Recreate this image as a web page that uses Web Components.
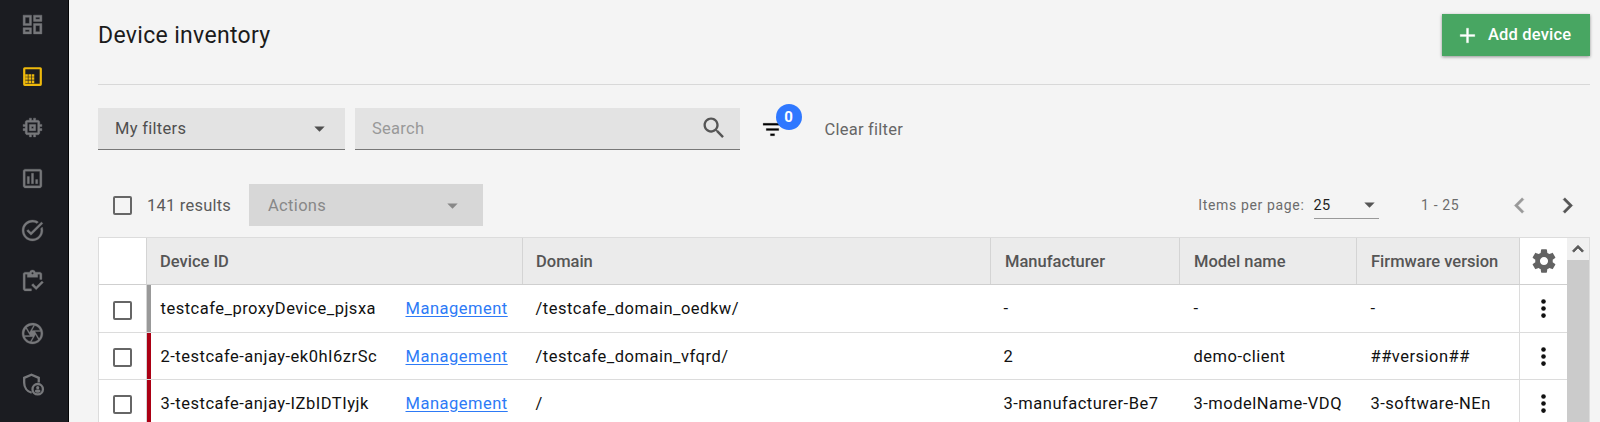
<!DOCTYPE html>
<html lang="en">
<head>
<meta charset="utf-8">
<title>Device inventory</title>
<style>
html,body{margin:0;height:100%;overflow:hidden}
body{font-family:Roboto,sans-serif;background:#f4f4f4}
</style>
</head>
<body>
<app-shell></app-shell>
<script>
const ICONS = {
  dashboard:'<path stroke="currentColor" stroke-width=".4" d="M19 5v2h-4V5h4M9 5v6H5V5h4m10 8v6h-4v-6h4M9 17v2H5v-2h4M21 3h-8v6h8V3zM11 3H3v10h8V3zm10 8h-8v10h8V11zm-10 4H3v6h8v-6z"/>',
  inventory:'<path fill-rule="evenodd" d="M4.500 3h15a1.500 1.500 0 0 1 1.500 1.500v15a1.500 1.500 0 0 1-1.500 1.500h-15a1.500 1.500 0 0 1-1.500-1.500v-15a1.500 1.500 0 0 1 1.500-1.500zM5.100 5.100v13.800h13.800V5.100z"/><path d="M5 9.800h2.500v2.400H5zM8.100 9.800h2.500v2.400H8.100zM11.200 9.800h2.500v2.400h-2.500zM5 12.800h2.500v2.400H5zM8.100 12.800h2.500v2.400H8.100zM11.200 12.800h2.500v2.400h-2.500zM5 15.800h2.500v2.700H5zM8.100 15.800h2.500v2.700H8.100zM11.200 15.800h2.500v2.700h-2.500z"/>',
  chip:'<path stroke="currentColor" stroke-width=".4" d="M15 9H9v6h6V9zm-2 4h-2v-2h2v2zm8-2V9h-2V7c0-1.100-.9-2-2-2h-2V3h-2v2h-2V3H9v2H7c-1.100 0-2 .9-2 2v2H3v2h2v2H3v2h2v2c0 1.100.9 2 2 2h2v2h2v-2h2v2h2v-2h2c1.100 0 2-.9 2-2v-2h2v-2h-2v-2h2zm-4 6H7V7h10v10z"/>',
  chart:'<path stroke="currentColor" stroke-width=".3" d="M19 3H5c-1.100 0-2 .9-2 2v14c0 1.100.9 2 2 2h14c1.100 0 2-.9 2-2V5c0-1.100-.9-2-2-2zm0 16H5V5h14v14zM7 10h2v7H7zm4-3h2v10h-2zm4 6h2v4h-2z"/>',
  task:'<path stroke="currentColor" stroke-width=".3" d="M22 5.180L10.590 16.600l-4.240-4.240 1.410-1.410 2.830 2.830 10-10L22 5.180zm-2.210 5.040c.13.57.21 1.170.21 1.780 0 4.420-3.580 8-8 8s-8-3.580-8-8 3.580-8 8-8c1.580 0 3.040.46 4.280 1.250l1.440-1.440C16.100 2.670 14.130 2 12 2 6.480 2 2 6.480 2 12s4.480 10 10 10 10-4.480 10-10c0-1.190-.22-2.330-.6-3.390l-1.610 1.610z"/>',
  clipboard:'<path stroke="currentColor" stroke-width=".3" d="M5 5h2v3h10V5h2v5h2V5c0-1.100-.9-2-2-2h-4.180C14.400 1.840 13.300 1 12 1s-2.400.84-2.820 2H5c-1.100 0-2 .9-2 2v14c0 1.100.9 2 2 2h6v-2H5V5zm7-2c.55 0 1 .45 1 1s-.45 1-1 1-1-.45-1-1 .45-1 1-1z"/><path stroke="currentColor" stroke-width=".3" d="M21 11.500L15.510 17l-3.010-3L11 15.500l4.510 4.500L22.500 13z"/>',
  aperture:'<path stroke="currentColor" stroke-width=".3" d="M14.250 2.260l-.08-.04-.01.02C13.460 2.090 12.740 2 12 2 6.480 2 2 6.480 2 12s4.480 10 10 10 10-4.480 10-10c0-4.750-3.310-8.720-7.750-9.740zM19.410 9h-7.990l2.710-4.700c2.400.66 4.350 2.420 5.280 4.700zM13.100 4.080L10.270 9l-1.150 2L6.400 6.300C7.840 4.880 9.820 4 12 4c.37 0 .74.03 1.100.08zM5.700 7.090L8.540 12l1.150 2H4.260C4.100 13.360 4 12.690 4 12c0-1.840.63-3.540 1.700-4.910zM4.590 15h7.980l-2.710 4.700c-2.400-.67-4.340-2.420-5.270-4.700zm6.310 4.910L14.890 13l2.720 4.700C16.160 19.120 14.180 20 12 20c-.38 0-.74-.04-1.100-.09zm7.400-3l-4-6.910h5.430c.17.64.27 1.310.27 2 0 1.840-.63 3.540-1.700 4.910z"/>',
  shield:'<path fill="none" stroke="currentColor" stroke-width="2.200" d="M18 10V5.600L11 2.600 4 5.600V10.200c0 4.500 2.900 8.500 7.200 9.700"/><circle cx="17" cy="16.500" r="5" fill="none" stroke="currentColor" stroke-width="2.200"/><circle cx="17" cy="15" r="1.500"/><path d="M14.200 18.400c.2-1.100 1.700-1.500 2.800-1.500s2.600.4 2.800 1.500c-.6.9-1.600 1.500-2.800 1.500s-2.200-.6-2.800-1.500z"/>',
  plus:'<path stroke="currentColor" stroke-width=".3" d="M19 13h-6v6h-2v-6H5v-2h6V5h2v6h6z"/>',
  caret:'<path d="M7 10l5 5 5-5z"/>',
  search:'<path d="M15.500 14h-.79l-.28-.27C15.410 12.590 16 11.110 16 9.500 16 5.910 13.090 3 9.500 3S3 5.910 3 9.500 5.910 16 9.500 16c1.610 0 3.090-.59 4.230-1.570l.27.28v.79l5 4.990L20.490 19l-4.990-5zm-6 0C7.010 14 5 11.990 5 9.500S7.010 5 9.500 5 14 7.010 14 9.500 11.990 14 9.500 14z"/>',
  filter:'<path stroke="currentColor" stroke-width=".2" d="M10 18h4v-2h-4v2zM3 6v2h18V6H3zm3 7h12v-2H6v2z"/>',
  left:'<path stroke="currentColor" stroke-width=".3" d="M15.410 7.410L14 6l-6 6 6 6 1.410-1.410L10.830 12z"/>',
  right:'<path stroke="currentColor" stroke-width=".3" d="M10 6L8.590 7.410 13.170 12l-4.580 4.590L10 18l6-6z"/>',
  up:'<path stroke="currentColor" stroke-width=".9" d="M12 8l-6 6 1.410 1.410L12 10.830l4.590 4.580L18 14z"/>',
  gear:'<path d="M19.430 12.980c.04-.32.07-.64.07-.98s-.03-.66-.07-.98l2.110-1.650c.19-.15.24-.42.12-.64l-2-3.460c-.12-.22-.39-.3-.61-.22l-2.490 1c-.52-.4-1.080-.73-1.690-.98l-.38-2.650C14.460 2.180 14.250 2 14 2h-4c-.25 0-.46.18-.49.42l-.38 2.650c-.61.25-1.170.59-1.690.98l-2.490-1c-.23-.09-.49 0-.61.22l-2 3.460c-.13.22-.07.49.12.64l2.110 1.650c-.04.32-.07.65-.07.98s.03.66.07.98l-2.110 1.650c-.19.15-.24.42-.12.64l2 3.460c.12.22.39.3.61.22l2.490-1c.52.4 1.080.73 1.690.98l.38 2.650c.03.24.24.42.49.42h4c.25 0 .46-.18.49-.42l.38-2.650c.61-.25 1.170-.59 1.690-.98l2.490 1c.23.09.49 0 .61-.22l2-3.460c.12-.22.07-.49-.12-.64l-2.110-1.650zM12 15.500c-1.930 0-3.500-1.570-3.500-3.500s1.570-3.500 3.500-3.500 3.500 1.570 3.500 3.500-1.570 3.500-3.500 3.500z"/>',
  more:'<circle cx="12" cy="5.200" r="2.200"/><circle cx="12" cy="12" r="2.200"/><circle cx="12" cy="18.800" r="2.200"/>'
};
const define = (name, html) => customElements.define(name, class extends HTMLElement {
  constructor(){
    super();
    this.attachShadow({mode:'open'}).innerHTML = typeof html === 'function' ? html(this) : html;
  }
});
const base = '*{box-sizing:border-box}';

define('ui-icon', el => `<style>:host{display:block;width:var(--size,25px);height:var(--size,25px);flex:none}svg{display:block;width:100%;height:100%;fill:currentColor}</style><svg viewBox="0 0 24 24">${ICONS[el.getAttribute('name')]}</svg>`);

define('ui-checkbox', `<style>:host{display:block;box-sizing:border-box;width:19px;height:19px;border:2px solid #666;border-radius:2px;flex:none}</style>`);

define('side-nav', `<style>${base}
:host{display:flex;flex-direction:column;align-items:center;gap:26.400px;width:69px;height:422px;padding:12.300px 4px 0 0;background:#1b1c21;border-right:1px solid #050506;color:#77787b;box-sizing:border-box;flex:none;overflow:hidden}
.on{color:#eeb90c}</style>
<ui-icon name="dashboard"></ui-icon><ui-icon name="inventory" class="on"></ui-icon><ui-icon name="chip"></ui-icon><ui-icon name="chart"></ui-icon><ui-icon name="task"></ui-icon><ui-icon name="clipboard"></ui-icon><ui-icon name="aperture"></ui-icon><ui-icon name="shield"></ui-icon>`);

define('page-header', `<style>${base}
:host{display:flex;justify-content:space-between;align-items:flex-start;height:85px;box-sizing:border-box;border-bottom:1px solid #d8d8d8;padding-top:14px}
h1{margin:0;font-size:23px;line-height:43px;font-weight:400;letter-spacing:.33px;color:#1b1b1b}
button{display:flex;align-items:center;width:148.500px;height:42px;padding:0 0 0 13px;gap:8.500px;border:0;background:#48a662;color:#fff;font:500 16.500px/42px Roboto,sans-serif;letter-spacing:.17px;box-shadow:0 1px 3px rgba(0,0,0,.4)}
</style><h1>Device inventory</h1><button><ui-icon name="plus"></ui-icon><span>Add device</span></button>`);

define('select-box', `<style>${base}
:host{display:flex;align-items:center;justify-content:space-between;height:42px;box-sizing:border-box;padding:0 13px 0 17px;background:#e3e3e3;border-bottom:1px solid #777;color:#4f4f4f;font-size:16.500px;letter-spacing:.3px}
:host([disabled]){background:#d7d7d7;border:0;color:#888;padding:0 18px 0 19px}
</style><slot></slot><ui-icon name="caret"></ui-icon>`);

define('search-box', `<style>${base}
:host{display:flex;align-items:center;justify-content:space-between;height:42px;box-sizing:border-box;padding:0 12px 0 17px;background:#e3e3e3;border-bottom:1px solid #777;color:#999;font-size:16.500px;letter-spacing:.27px}
ui-icon{--size:28px;color:#555;margin-top:-2px}
</style><slot></slot><ui-icon name="search"></ui-icon>`);

define('filter-toggle', `<style>${base}
:host{display:block;position:relative;width:25px;height:25px;color:#000}
span{position:absolute;left:15.500px;top:-12.500px;width:26px;height:26px;border-radius:50%;background:#2f78ff;color:#fff;font-weight:700;font-size:15px;line-height:26px;letter-spacing:0;text-align:center}
</style><ui-icon name="filter"></ui-icon><span><slot></slot></span>`);

define('filter-bar', `<style>${base}
:host{display:flex;align-items:center;height:42px;margin-top:23px;color:#666;font-size:16.500px;letter-spacing:.24px}
select-box{width:247px;margin-right:10px}search-box{width:385px;margin-right:20px}.clear{margin-left:39.500px}
filter-toggle{margin-top:0}
</style><select-box>My filters</select-box><search-box>Search</search-box><filter-toggle>0</filter-toggle><span class="clear">Clear filter</span>`);

define('result-bar', `<style>${base}
:host{display:flex;align-items:center;height:42px;margin-top:34px;color:#5a5a5a;font-size:16.500px;letter-spacing:.22px}
ui-checkbox{margin:0 15px 0 15px}
.n{width:102px}select-box{width:234px;letter-spacing:.33px}
.pager{margin-left:auto;display:flex;align-items:center;font-size:14px;letter-spacing:.65px;color:#6c6c6c}
.ps{display:flex;align-items:center;justify-content:space-between;width:65px;height:27px;margin:0 42.500px 0 9px;border-bottom:1px solid #999;color:#1f1f1f;font-size:14.500px;letter-spacing:.3px}
.ps span{padding-top:1px}
.ps ui-icon{color:#555;margin-right:-3px}
.range{width:83px}
.prev{color:#999;margin-right:17px}.next{color:#555;margin-right:7px}
.prev,.next{--size:31px}
</style><ui-checkbox></ui-checkbox><span class="n">141 results</span><select-box disabled>Actions</select-box>
<div class="pager"><span>Items per page:</span><div class="ps"><span>25</span><ui-icon name="caret"></ui-icon></div><span class="range">1 - 25</span><ui-icon class="prev" name="left"></ui-icon><ui-icon class="next" name="right"></ui-icon></div>`);

const cols = 'grid-template-columns:47px 376px 468px 189px 177px 163px 48px';
define('table-head', `<style>${base}
:host{display:grid;${cols};height:47px;border-bottom:1px solid #cfcfcf;box-sizing:border-box}
div{display:flex;align-items:center;padding-left:13px;background:#ebebeb;border-left:1px solid #d4d4d4;color:#555;font-weight:500;font-size:16.500px}
div:first-of-type{background:#fff;border:0}
div:nth-of-type(n+4){padding-left:14px}
div:last-of-type{background:#fff;padding:0;justify-content:center;color:#636363}
div:last-of-type ui-icon{--size:28px}
</style><div></div><div>Device ID</div><div>Domain</div><div>Manufacturer</div><div>Model name</div><div>Firmware version</div><div><ui-icon name="gear"></ui-icon></div>`);

define('device-row', el => { const a = n => el.getAttribute(n); return `<style>${base}
:host{display:grid;${cols};height:var(--h,47px);border-bottom:1px solid #dcdcdc;box-sizing:border-box;background:#fff}
div{display:flex;align-items:center;padding:0 0 0 13.500px;color:#111;font-size:16.500px;letter-spacing:.5px;white-space:nowrap}
div:nth-of-type(n+5){padding-left:14.500px}
.check{padding:3px 0 0 13.500px}
.id{position:relative;border-left:1px solid #d4d4d4;padding-left:13.500px}
.id::before{content:"";position:absolute;left:0;top:0;bottom:0;width:4px;background:var(--status,#ab0014)}
.id span{width:245px}
a{color:#2d7af6;text-decoration:underline;text-underline-offset:2px}
div.menu{justify-content:center;padding:0;border-left:1px solid #dcdcdc;color:#111}
</style><div class="check"><ui-checkbox></ui-checkbox></div><div class="id"><span>${a('device')}</span><a>Management</a></div><div>${a('domain')}</div><div>${a('maker')}</div><div>${a('model')}</div><div>${a('firmware')}</div><div class="menu"><ui-icon name="more"></ui-icon></div>`; });

define('scroll-track', `<style>${base}
:host{display:flex;flex-direction:column;width:23px;background:#cbcbcb;border-right:1px solid #ddd;box-sizing:border-box}
div{height:22px;background:#f0f0f0;color:#5a5a5a;display:flex;align-items:center;justify-content:center}
ui-icon{--size:22px}
</style><div><ui-icon name="up"></ui-icon></div>`);

define('device-table', `<style>${base}
:host{display:flex;margin-top:11px;height:185px;border:1px solid #dcdcdc;border-right:0;border-bottom:0;box-sizing:border-box;background:#fff;overflow:hidden}
main{flex:1;min-width:0}
</style><main><table-head></table-head>
<device-row style="--status:#999;--h:48px" device="testcafe_proxyDevice_pjsxa" domain="/testcafe_domain_oedkw/" maker="-" model="-" firmware="-"></device-row>
<device-row device="2-testcafe-anjay-ek0hI6zrSc" domain="/testcafe_domain_vfqrd/" maker="2" model="demo-client" firmware="##version##"></device-row>
<device-row device="3-testcafe-anjay-IZbIDTIyjk" domain="/" maker="3-manufacturer-Be7" model="3-modelName-VDQ" firmware="3-software-NEn"></device-row>
</main><scroll-track></scroll-track>`);

define('app-shell', `<style>${base}
:host{display:flex;width:1600px;height:422px;overflow:hidden}
section{flex:1;min-width:0;padding:0 10px 0 29px}
</style><side-nav></side-nav><section><page-header></page-header><filter-bar></filter-bar><result-bar></result-bar><device-table></device-table></section>`);
</script>
</body>
</html>
